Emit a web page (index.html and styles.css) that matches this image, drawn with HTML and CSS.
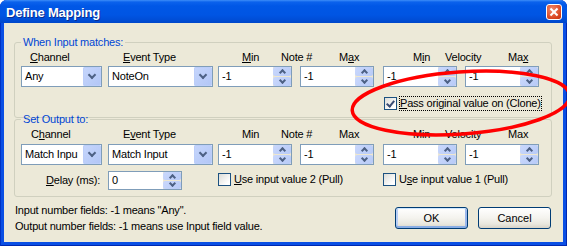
FILE: index.html
```html
<!DOCTYPE html>
<html lang="en">
<head>
    <meta charset="UTF-8">
    <title>Define Mapping</title>
    <link rel="stylesheet" href="styles.css">
</head>
<body>
<div class="window">
    <div class="titlebar">
        <span class="title">Define Mapping</span>
        <span class="close"></span>
    </div>
    <div class="content">
        <fieldset class="group">
            <legend>When Input matches:</legend>
            <div class="grid">
                <span class="lbl l-chan"><u>C</u>hannel</span>
                <span class="lbl l-type"><u>E</u>vent Type</span>
                <span class="lbl l-min"><u>M</u>in</span>
                <span class="lbl l-note">Note #</span>
                <span class="lbl l-max">M<u>a</u>x</span>
                <span class="lbl l-vmin">M<u>i</u>n</span>
                <span class="lbl l-vel">Velocity</span>
                <span class="lbl l-vmax">Ma<u>x</u></span>

                <div class="combo w-chan"><span class="val">Any</span><span class="drop"></span></div>
                <div class="combo w-type"><span class="val">NoteOn</span><span class="drop"></span></div>
                <div class="spin"><span class="val">-1</span><span class="arrows"><span class="up"></span><span class="down"></span></span></div>
                <div class="spin"><span class="val">-1</span><span class="arrows"><span class="up"></span><span class="down"></span></span></div>
                <div class="spin"><span class="val">-1</span><span class="arrows"><span class="up"></span><span class="down"></span></span></div>
                <div class="spin"><span class="val">-1</span><span class="arrows"><span class="up"></span><span class="down"></span></span></div>

                <label class="check c-pass"><span class="box checked"></span><span class="text focus"><u>P</u>ass original value on (Clone)</span></label>
            </div>
        </fieldset>

        <fieldset class="group group-out">
            <legend>Set Output to:</legend>
            <div class="grid">
                <span class="lbl l-chan">C<u>h</u>annel</span>
                <span class="lbl l-type">E<u>v</u>ent Type</span>
                <span class="lbl l-min">Min</span>
                <span class="lbl l-note">Note #</span>
                <span class="lbl l-max">Max</span>
                <span class="lbl l-vmin">Min</span>
                <span class="lbl l-vel">Velocity</span>
                <span class="lbl l-vmax">Max</span>

                <div class="combo w-chan"><span class="val">Match Inpu</span><span class="drop"></span></div>
                <div class="combo w-type"><span class="val">Match Input</span><span class="drop"></span></div>
                <div class="spin"><span class="val">-1</span><span class="arrows"><span class="up"></span><span class="down"></span></span></div>
                <div class="spin"><span class="val">-1</span><span class="arrows"><span class="up"></span><span class="down"></span></span></div>
                <div class="spin"><span class="val">-1</span><span class="arrows"><span class="up"></span><span class="down"></span></span></div>
                <div class="spin"><span class="val">-1</span><span class="arrows"><span class="up"></span><span class="down"></span></span></div>

                <span class="lbl l-delay"><u>D</u>elay (ms):</span>
                <div class="spin small c-delay"><span class="val">0</span><span class="arrows"><span class="up"></span><span class="down"></span></span></div>
                <label class="check c-pull2"><span class="box"></span><span class="text"><u>U</u>se input value 2 (Pull)</span></label>
                <label class="check c-pull1"><span class="box"></span><span class="text">U<u>s</u>e input value 1 (Pull)</span></label>
            </div>
        </fieldset>

        <div class="footer">
            <div class="notes">
                <div>Input number fields: -1 means "Any".</div>
                <div>Output number fields: -1 means use Input field value.</div>
            </div>
            <div class="buttons">
                <button class="btn default">OK</button>
                <button class="btn">Cancel</button>
            </div>
        </div>
    </div>

    <!-- red marker drawn over the screenshot -->
    <svg class="marker" width="567" height="246" viewBox="0 0 567 246">
        <ellipse cx="461" cy="103" rx="109" ry="31" transform="rotate(-4 461 103)" />
    </svg>
</div>
</body>
</html>
```

FILE: styles.css
```css
body {
    margin: 0;
    background: #ffffff;
    font-family: "Liberation Sans", Arial, sans-serif;
    font-size: 11px;
    letter-spacing: -0.2px;
    color: #000;
    overflow: hidden;
}

.window {
    position: relative;
    width: 567px;
    height: 246px;
    box-sizing: border-box;
    display: flex;
    flex-direction: column;
    padding: 0 4px 4px;
    background: #0A4FE4;
    border-radius: 7px 7px 0 0;
    box-shadow: inset 1px 0 #0032C4, inset -1px 0 #0028B0, inset 0 -1px #0028B0;
}

/* title bar */
.titlebar {
    height: 23px;
    margin: 0 -4px;
    padding: 0 6px 0 6px;
    display: flex;
    align-items: center;
    justify-content: space-between;
    border-radius: 7px 7px 0 0;
    background: linear-gradient(#3D8DF8 0, #0B62EC 2px, #0057E6 6px, #0055E3 15px, #004DD6 20px, #0047C9 23px);
}
.title {
    color: #fff;
    font-weight: bold;
    font-size: 13px;
    letter-spacing: -0.2px;
    text-shadow: 1px 1px #0A2C8E;
    padding-top: 1px;
}
.close {
    position: relative;
    width: 16px;
    height: 16px;
    margin-right: -1px;
    box-sizing: border-box;
    border: 1px solid #fff;
    border-radius: 3px;
    background: radial-gradient(circle at 35% 30%, #F0876A, #D9441F 70%, #C1330E);
}
.close::before, .close::after {
    content: "";
    position: absolute;
    left: 6px;
    top: 2px;
    width: 2px;
    height: 10px;
    background: #fff;
    transform: rotate(45deg);
}
.close::after {
    transform: rotate(-45deg);
}

/* dialog body */
.content {
    flex: 1;
    background: #ECE9D8;
    padding: 13px 11px 0 10px;
}

.group {
    margin: 0;
    padding: 2px 6px 6px;
    border: 1px solid #D0D0BF;
    border-radius: 3px;
    min-width: 0;
}
.group legend {
    padding: 0 2px;
    color: #0046D5;
    line-height: 13px;
}
.group-out {
    margin-top: -5px;
}

.grid {
    display: grid;
    grid-template-columns: 87px 110px 82px 83px 82px 1fr;
    grid-template-rows: 13px 21px auto;
    row-gap: 2px;
}
.group-out .grid {
    row-gap: 3px;
}

.lbl {
    grid-row: 1;
    line-height: 13px;
    white-space: nowrap;
}
.l-chan { grid-column: 1; margin-left: 9px; }
.l-type { grid-column: 2; margin-left: 15px; }
.l-min  { grid-column: 3; margin-left: 24px; }
.l-note { grid-column: 3 / span 2; margin-left: 63px; }
.l-max  { grid-column: 4; margin-left: 39px; }
.l-vmin { grid-column: 5; margin-left: 30px; }
.l-vel  { grid-column: 5 / span 2; margin-left: 62px; }
.l-vmax { grid-column: 6; margin-left: 43px; }
.group-out .l-chan { margin-left: 10px; }

.l-delay {
    grid-row: 3;
    grid-column: 1;
    justify-self: end;
    align-self: center;
    margin: 3px 8px 0 0;
}

/* combo boxes */
.combo {
    display: flex;
    height: 21px;
    box-sizing: border-box;
    border: 1px solid #7F9DB9;
    background: #fff;
}
.w-chan { width: 81px; }
.w-type { width: 105px; }
.combo .val {
    flex: 1;
    padding-left: 3px;
    line-height: 19px;
    white-space: nowrap;
    overflow: hidden;
}
.drop {
    position: relative;
    width: 18px;
    border-radius: 2px;
    background: linear-gradient(135deg, #C6D6FC, #B2C6F6);
    box-shadow: inset 0 0 0 1px #BCCEF9;
}
.drop::before {
    content: "";
    position: absolute;
    left: 6px;
    top: 5px;
    width: 4px;
    height: 4px;
    border: solid #4D6185;
    border-width: 0 2px 2px 0;
    transform: rotate(45deg);
}

/* spin (up-down) boxes */
.spin {
    display: flex;
    width: 74px;
    height: 21px;
    box-sizing: border-box;
    border: 1px solid #7F9DB9;
    background: #fff;
}
.spin .val {
    flex: 1;
    padding-left: 3px;
    line-height: 19px;
}
.arrows {
    width: 18px;
    display: flex;
    flex-direction: column;
    gap: 1px;
    background: #EEE7CF;
}
.arrows span {
    position: relative;
    flex: 1;
    border-radius: 2px;
    background: linear-gradient(135deg, #CAD8FC, #B7CAF7);
}
.arrows span::before {
    content: "";
    position: absolute;
    left: 7px;
    width: 3px;
    height: 3px;
    border: solid #4D6185;
    border-width: 2px 0 0 2px;
    transform: rotate(45deg);
}
.arrows .up::before { top: 3px; }
.arrows .down::before { top: 1px; transform: rotate(225deg); }
.spin.small { height: 19px; }
.spin.small .val { line-height: 17px; }
.spin.small .arrows .up::before { top: 3px; }
.spin.small .arrows .down::before { top: 0; }

.c-delay {
    grid-row: 3;
    grid-column: 2;
    margin-top: 3px;
}

/* check boxes */
.check {
    display: flex;
    align-items: center;
    gap: 2px;
    white-space: nowrap;
}
.box {
    position: relative;
    width: 13px;
    height: 13px;
    box-sizing: border-box;
    border: 1px solid #1C5180;
    background: linear-gradient(135deg, #DCDCD7, #FFFFFF 80%);
}
.box.checked::before {
    content: "";
    position: absolute;
    left: 3px;
    top: 1px;
    width: 3px;
    height: 6px;
    border: solid #3A4C74;
    border-width: 0 2px 2px 0;
    transform: rotate(40deg);
}
.check .text {
    border: 1px solid transparent;
    line-height: 13px;
}
.check .text.focus {
    border: 1px dotted #000;
}
.c-pass {
    grid-row: 3;
    grid-column: 5 / span 2;
    margin: 7px 0 0 1px;
}
.c-pull2, .c-pull1 {
    grid-row: 3;
    align-self: start;
    margin-top: 4px;
}
.c-pull2 { grid-column: 3 / span 2; }
.c-pull1 { grid-column: 5 / span 2; }

/* bottom notes and buttons */
.footer {
    display: flex;
    justify-content: space-between;
    align-items: flex-start;
    margin-top: 5px;
    padding: 0 1px 0 1px;
}
.notes {
    line-height: 16px;
}
.buttons {
    display: flex;
    gap: 10px;
    margin-top: 5px;
}
.btn {
    width: 73px;
    height: 22px;
    padding: 0;
    box-sizing: border-box;
    border: 1px solid #003C74;
    border-radius: 3px;
    font: inherit;
    color: #000;
    background: linear-gradient(#FFFFFF, #F4F3EE 50%, #E9E7DE 80%, #D8D3C7);
}
.btn.default {
    box-shadow: inset 0 1px #CEE7FF, inset 0 -2px #89ADE4, inset 2px 0 #B8CFF6, inset -2px 0 #9CB8EC;
}

.marker {
    position: absolute;
    left: 0;
    top: 0;
    pointer-events: none;
}
.marker ellipse {
    fill: none;
    stroke: #FF0000;
    stroke-width: 3.5;
}
```
